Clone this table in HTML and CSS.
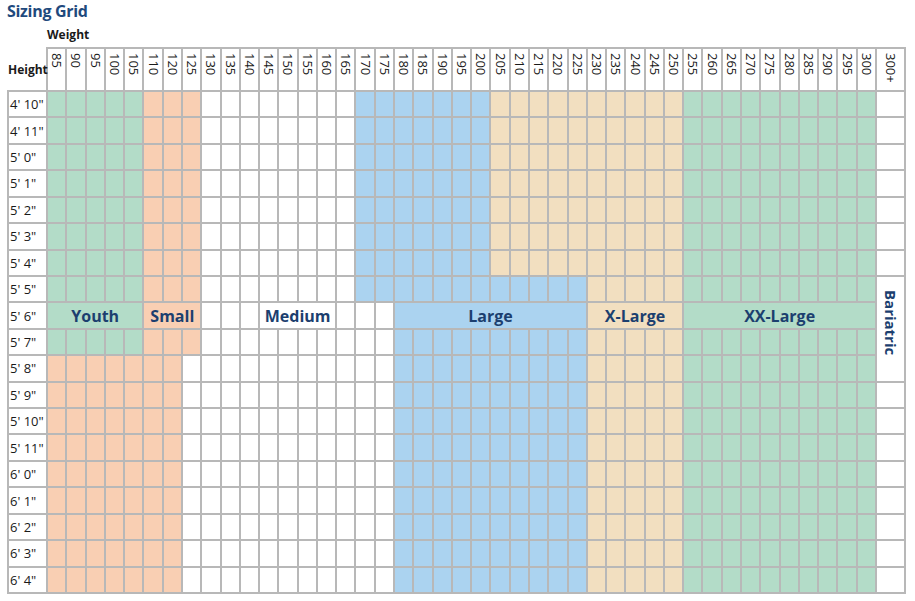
FILE: index.html
```html
<!DOCTYPE html>
<html lang="en">
<head>
<meta charset="utf-8">
<title>Sizing Grid</title>
<link rel="stylesheet" href="styles.css">
</head>
<body>
<h1 class="title">Sizing Grid</h1>
<div class="weight-label">Weight</div>
<div class="grid" id="grid"></div>
<script src="script.js"></script>
</body>
</html>
```

FILE: styles.css
```css
* { box-sizing: border-box; }
body {
  margin: 0;
  background: #fff;
  font-family: "Open Sans", "Noto Sans", sans-serif;
  color: #1a1a1a;
}
.title {
  margin: 0 0 0 7px;
  height: 22px;
  line-height: 22px;
  font-size: 16px;
  font-weight: 700;
  color: #1f4a7d;
  letter-spacing: -0.3px;
}
.weight-label {
  height: 25px;
  line-height: 25px;
  padding-left: 47px;
  font-size: 12px;
  font-weight: 700;
}
.grid {
  display: grid;
  grid-template-columns: 41px repeat(43, 1fr) 29px;
  grid-template-rows: 45px repeat(19, 1fr);
  width: 899px;
  height: 547px;
  margin-left: 7px;
}
.cell {
  border-right: 2px solid #b8b8b8;
  border-bottom: 2px solid #b8b8b8;
  display: flex;
  align-items: center;
  justify-content: center;
  min-width: 0;
  min-height: 0;
  overflow: visible;
  white-space: nowrap;
}
.corner {
  justify-content: flex-start;
  padding-left: 1px;
  padding-top: 2px;
  font-size: 12px;
  font-weight: 700;
}
.wh {
  border-top: 2px solid #b8b8b8;
  align-items: flex-start;
  padding-top: 4px;
  font-size: 13px;
}
.wh span {
  writing-mode: vertical-rl;
  line-height: 1;
}
.rl {
  border-left: 2px solid #b8b8b8;
  justify-content: flex-start;
  padding-left: 1px;
  font-size: 13px;
}
.green { background: #b3dcc8; }
.salmon { background: #f9cfb3; }
.blue { background: #abd3f0; }
.tan { background: #f2dfc0; }
.white { background: #fff; }
.region span {
  font-size: 16px;
  font-weight: 700;
  color: #1c3f6f;
}
.bariatric {
  align-items: flex-start;
  padding-top: 13px;
}
.bariatric span {
  writing-mode: vertical-rl;
  font-size: 15px;
  font-weight: 700;
  color: #1c3f6f;
  line-height: 1;
}
.span3 { grid-column: span 3; }
.span4 { grid-column: span 4; }
.span5 { grid-column: span 5; }
.span10 { grid-column: span 10; }
.rspan4 { grid-row: span 4; }
```

FILE: script.js
```js
(function () {
  var grid = document.getElementById('grid');
  var weights = [85, 90, 95, 100, 105, 110, 120, 125];
  for (var w = 130; w <= 300; w += 5) weights.push(w);
  weights.push('300+');

  function el(cls, text) {
    var d = document.createElement('div');
    d.className = 'cell ' + cls;
    if (text !== undefined) {
      var s = document.createElement('span');
      s.textContent = text;
      d.appendChild(s);
    }
    grid.appendChild(d);
    return d;
  }

  function color(r, j) {
    if (j <= 4) return r <= 9 ? 'green' : 'salmon';
    if (j <= 6) return 'salmon';
    if (j === 7) return r <= 9 ? 'salmon' : 'white';
    if (j <= 15) return 'white';
    if (j <= 17) return r <= 7 ? 'blue' : 'white';
    if (j <= 22) return 'blue';
    if (j <= 27) return r <= 6 ? 'tan' : 'blue';
    if (j <= 32) return 'tan';
    if (j <= 42) return 'green';
    return 'white';
  }

  var merges = {
    0: [5, 'Youth'],
    5: [3, 'Small'],
    11: [4, 'Medium'],
    18: [10, 'Large'],
    28: [5, 'X-Large'],
    33: [10, 'XX-Large']
  };

  el('corner', 'Height');
  weights.forEach(function (wt) { el('wh', String(wt)); });

  for (var r = 0; r < 19; r++) {
    var inches = 58 + r;
    el('rl', Math.floor(inches / 12) + "' " + (inches % 12) + '"');
    for (var j = 0; j < 44; j++) {
      if (j === 43 && r >= 8 && r <= 10) continue;
      if (r === 8 && merges[j]) {
        var n = merges[j][0];
        el(color(r, j) + ' region span' + n, merges[j][1]);
        j += n - 1;
        continue;
      }
      if (j === 43 && r === 7) {
        el('white bariatric rspan4', 'Bariatric');
        continue;
      }
      el(color(r, j));
    }
  }
})();
```
